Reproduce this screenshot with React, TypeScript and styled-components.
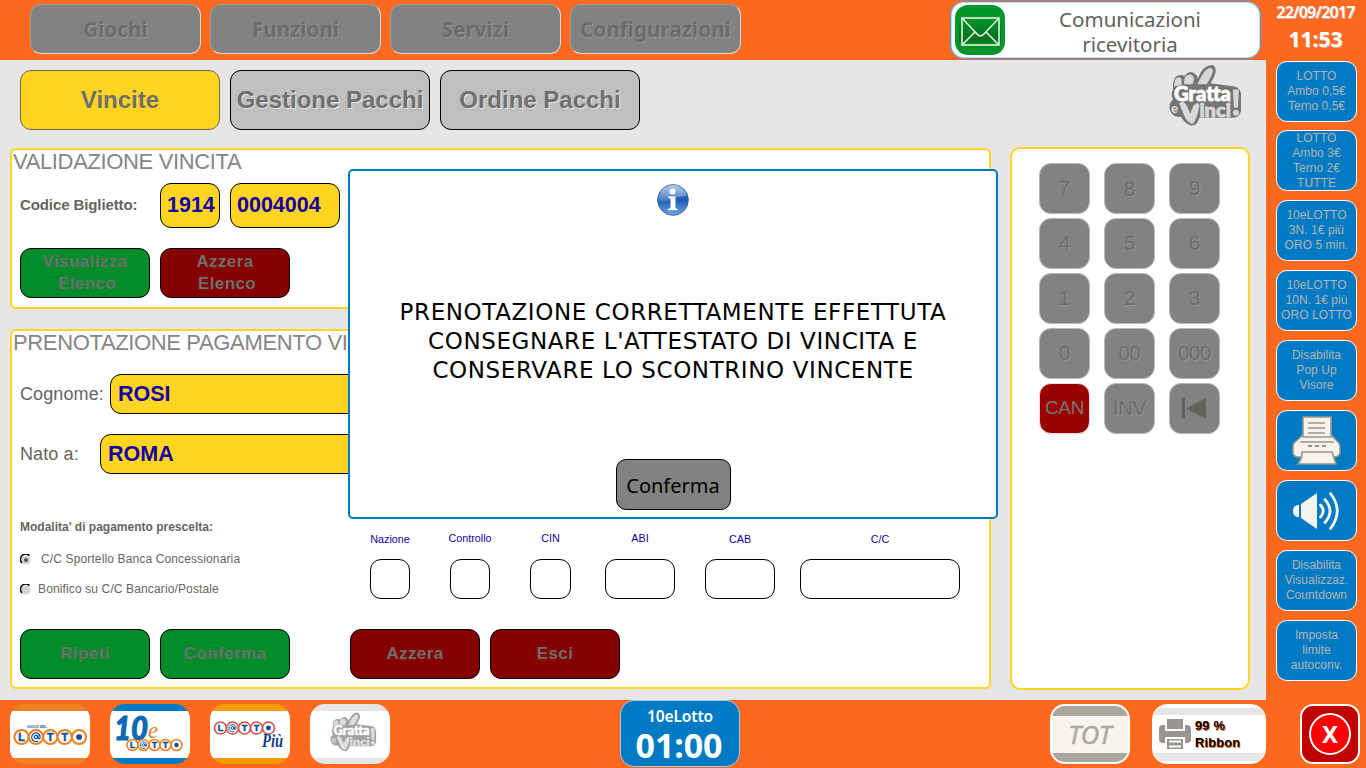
import React from 'react';
import styled, { createGlobalStyle } from 'styled-components';

const Global = createGlobalStyle`
  *, *::before, *::after { box-sizing: border-box; }
  html, body { margin: 0; padding: 0; overflow: hidden; }
  button { font: inherit; margin: 0; padding: 0; }
`;

const helvetica = `'Liberation Sans', Arial, sans-serif`;
const humanist = `'Noto Sans', sans-serif`;
const orange = '#ff681f';
const blue = '#007bc3';
const yellow = '#ffd520';
const green = '#008c29';
const red = '#850000';

const Screen = styled.div`
  position: relative;
  width: 1366px;
  height: 768px;
  display: flex;
  flex-direction: column;
  background: ${orange};
  font-family: ${helvetica};
  overflow: hidden;
  white-space: nowrap;
`;
const Upper = styled.div`
  display: flex;
  height: 700px;
  flex-shrink: 0;
`;
const Content = styled.div`
  width: 1266px;
  display: flex;
  flex-direction: column;
`;
const Header = styled.header`
  height: 60px;
  flex-shrink: 0;
  display: flex;
  padding: 4px 5px 0 30px;
  gap: 9px;
`;
const MenuButton = styled.button`
  width: 171px;
  height: 50px;
  border: 1px solid;
  border-color: #a09c98 #dcd8d4 #dcd8d4 #a09c98;
  border-radius: 11px;
  background: #828282;
  color: #6b6b6b;
  font: bold 20.5px/49px ${humanist};
  letter-spacing: 0.1px;
  text-shadow: 1px 1px 0 #969696;
`;
const NoticeButton = styled.button`
  width: 311px;
  height: 58px;
  margin: -3px 0 0 auto;
  border: 1px solid #4b96d8;
  box-shadow: inset 0 0 0 1px #c4def5;
  border-radius: 14px;
  background: #fff;
  display: flex;
  align-items: center;
  padding-left: 4px;
`;
const NoticeText = styled.span`
  flex: 1;
  padding: 3px 5px 0 0;
  text-align: center;
  color: #62615c;
  font: 20.5px/25px ${humanist};
`;
const Main = styled.main`
  height: 640px;
  background: #e6e6e6;
  display: flex;
`;
const Work = styled.div`
  width: 1000px;
  padding: 10px 9px 0 10px;
`;
const Aside = styled.div`
  width: 266px;
  padding: 0 16px 0 10px;
  display: flex;
  flex-direction: column;
`;
const Brand = styled.div`
  height: 87px;
  padding: 4px 8px 0 0;
  display: flex;
  justify-content: flex-end;
`;
const Tabs = styled.nav`
  display: flex;
  gap: 10px;
  padding-left: 10px;
  margin-bottom: 18px;
`;
const Tab = styled.button<{ $active?: boolean }>`
  width: 200px;
  height: 60px;
  border: 1px solid ${(p) => (p.$active ? '#76684a' : '#000')};
  border-radius: 11px;
  background: ${(p) => (p.$active ? yellow : '#bfbfbf')};
  color: #6f6f6f;
  font: bold 24px/58px ${helvetica};
  text-shadow: ${(p) => (p.$active ? 'none' : '1px 1px 0 #e4e4e4')};
`;
const Panels = styled.div`
  display: flex;
  flex-direction: column;
  gap: 20px;
`;
const Panel = styled.section<{ $height: number }>`
  width: 981px;
  height: ${(p) => p.$height}px;
  border: 2px solid ${yellow};
  border-radius: 6px;
  background: #fff;
  padding: 0 8px;
`;
const PanelTitle = styled.h2`
  margin: 0 0 0 -7px;
  font: 22px/23px ${helvetica};
  letter-spacing: -0.36px;
  color: #858585;
`;
const Row = styled.div<{ $top?: number }>`
  display: flex;
  align-items: center;
  margin-top: ${(p) => p.$top ?? 0}px;
`;
const FieldLabel = styled.label<{ $width: number; $bold?: boolean }>`
  width: ${(p) => p.$width}px;
  padding-bottom: ${(p) => (p.$bold ? 2 : 0)}px;
  color: #66655f;
  font: ${(p) => (p.$bold ? 'bold 15px' : '18px')}/20px ${helvetica};
  letter-spacing: ${(p) => (p.$bold ? '-0.1px' : '0.1px')};
`;
const Field = styled.div<{ $width: number; $height: number }>`
  width: ${(p) => p.$width}px;
  height: ${(p) => p.$height}px;
  margin-right: 10px;
  border: 1px solid #000;
  border-radius: 11px;
  background: ${yellow};
  color: #1500a6;
  padding-left: ${(p) => (p.$width > 200 ? 7 : 6)}px;
  font: bold 21.5px/${(p) => (p.$width > 200 ? p.$height - 1 : p.$height - 3)}px ${helvetica};
`;
const Action = styled.button<{ $tone: string }>`
  width: 130px;
  height: 50px;
  margin-right: 10px;
  border: 1px solid #000;
  border-radius: 11px;
  background: ${(p) => p.$tone};
  color: #6f6f6f;
  font: bold 17px/22px ${helvetica};
  letter-spacing: 0.4px;
`;
const Indent = styled.span`
  display: block;
  padding-left: 4px;
`;
const Gap = styled.span`
  width: 50px;
`;
const Payment = styled.div`
  display: flex;
  height: 105px;
  margin-top: 50px;
`;
const Modes = styled.div`
  width: 350px;
`;
const ModesTitle = styled.div`
  font: bold 12px/16px ${helvetica};
  color: #66655f;
  margin-bottom: 17px;
  margin-top: -5px;
`;
const Mode = styled.div<{ $gap: number }>`
  display: flex;
  align-items: center;
  gap: ${(p) => p.$gap}px;
  height: 14px;
  margin-bottom: 16px;
  color: #66655f;
  font: 12px/14px ${helvetica};
  letter-spacing: 0.13px;
`;
const Iban = styled.div`
  display: flex;
  padding-top: 8px;
`;
const IbanPart = styled.div<{ $width: number; $gap: number }>`
  width: ${(p) => p.$width}px;
  margin-right: ${(p) => p.$gap}px;
`;
const IbanLabel = styled.div<{ $low?: boolean }>`
  height: 27px;
  padding-top: ${(p) => (p.$low ? 1 : 0)}px;
  display: flex;
  justify-content: center;
  color: #1500a6;
  font: 10.8px/12px ${helvetica};
`;
const IbanBox = styled.div`
  height: 40px;
  border: 1px solid #000;
  border-radius: 11px;
  background: #fff;
`;
const Keypad = styled.section`
  width: 240px;
  height: 543px;
  border: 2px solid ${yellow};
  border-radius: 10px;
  background: #fff;
  padding: 14px 0 0 27px;
  display: grid;
  grid-template-columns: repeat(3, 51px);
  grid-auto-rows: 51px;
  gap: 4px 14px;
`;
const Key = styled.button<{ $danger?: boolean; $low?: boolean }>`
  border: 1px solid ${(p) => (p.$danger ? '#f0dcdc' : '#b8b8b8')};
  border-radius: 12px;
  background: ${(p) => (p.$danger ? '#990000' : '#828282')};
  color: ${(p) => (p.$danger ? '#777' : '#6c6c6c')};
  font: ${(p) => (p.$danger ? 19 : 20.5)}px/46px ${helvetica};
  letter-spacing: -0.4px;
  padding-bottom: ${(p) => (p.$low ? 0 : 2)}px;
  text-shadow: ${(p) => (p.$danger ? 'none' : '1px 1px 0 #949494')};
  display: flex;
  align-items: center;
  justify-content: center;
`;
const Sidebar = styled.aside`
  width: 100px;
  padding-left: 10px;
`;
const Clock = styled.div`
  height: 61px;
  color: #fff;
  width: 79px;
  text-align: center;
  padding-top: 2px;
  text-shadow: 1px 1px 0 #e0a890;
`;
const DateText = styled.div`
  font: 600 16px/20px ${humanist};
  letter-spacing: -0.75px;
`;
const TimeText = styled.div`
  margin-top: 4px;
  font: bold 21px/26px ${humanist};
`;
const Shortcut = styled.button`
  width: 81px;
  height: 61px;
  margin-bottom: 9px;
  border: 1px solid #fff;
  border-radius: 11px;
  background: ${blue};
  color: #b4b4b4;
  font: 12px/15px ${helvetica};
  letter-spacing: 0.05px;
  display: flex;
  align-items: center;
  justify-content: center;
  white-space: pre;
  overflow: hidden;
  &:nth-of-type(1) { margin-bottom: 8px; }
`;
const Footer = styled.footer`
  height: 68px;
  display: flex;
  align-items: flex-start;
  padding: 4px 0 0 10px;
`;
const Game = styled.button<{ $band: string }>`
  width: 80px;
  height: 60px;
  margin-right: 20px;
  border: 0;
  border-radius: 15px;
  overflow: hidden;
  background: linear-gradient(${(p) => p.$band} 7px, #fff 7px 54px, ${(p) => p.$band} 54px);
`;
const GameArt = styled.svg`
  display: block;
`;
const Countdown = styled.div`
  width: 120px;
  height: 67px;
  margin: -4px 310px 0 210px;
  border: 1px solid #9ccdf0;
  border-radius: 14px;
  background: ${blue};
  color: #fff;
  text-align: center;
  font: 600 15.5px/20px ${humanist};
  letter-spacing: -0.1px;
  padding-top: 5px;
`;
const CountdownTime = styled.div`
  font: bold 34px/38px ${humanist};
  padding-right: 2px;
`;
const Total = styled.button`
  width: 80px;
  height: 60px;
  margin-right: 22px;
  border: 2px solid #fff;
  border-radius: 15px;
  background: linear-gradient(#aaa79f 10px, #f7f3ed 10px 47px, #aaa79f 47px);
  color: #aaa79f;
  font: italic 400 25.5px/56px ${humanist};
  letter-spacing: 0.3px;
  -webkit-text-stroke: 0.4px #aaa79f;
`;
const Ribbon = styled.div`
  width: 114px;
  height: 60px;
  margin-right: 34px;
  border: 1px solid #fff;
  border-radius: 15px;
  background: linear-gradient(#fff 3px, #e6e6e6 3px 10px, #fff 10px 48px, #e6e6e6 48px 56px, #fff 56px);
  display: flex;
  align-items: center;
  gap: 4px;
  padding: 0 0 0 6px;
  font: bold 12.8px/17px ${helvetica};
  letter-spacing: 0.2px;
  color: #000;
  text-shadow: 1px 1px 0 ${orange};
`;
const Close = styled.button`
  width: 60px;
  height: 60px;
  border: 2px solid #fff;
  border-radius: 13px;
  background: #c00000;
  display: flex;
  align-items: center;
  justify-content: center;
`;
const CloseRing = styled.span`
  width: 42px;
  height: 42px;
  border: 2px solid #fff;
  border-radius: 50%;
  background: #ff0000;
  color: #fff;
  font: bold 24px/37px ${humanist};
`;
const Dialog = styled.div`
  position: absolute;
  left: 348px;
  top: 169px;
  width: 650px;
  height: 350px;
  border: 2px solid ${blue};
  border-radius: 5px;
  background: #fff;
  display: flex;
  flex-direction: column;
  align-items: center;
  padding-top: 13px;
`;
const Message = styled.div`
  margin-top: 82px;
  height: 87px;
  text-align: center;
  font: 23px/29px 'DejaVu Sans', sans-serif;
  letter-spacing: 0.6px;
  color: #000;
`;
const Confirm = styled.button`
  width: 115px;
  height: 51px;
  margin-top: 74px;
  border: 1px solid #000;
  border-radius: 10px;
  background: #828282;
  color: #000;
  font: 20px/51px ${humanist};
`;

const Envelope = () => (
  <svg width="50" height="50" viewBox="0 0 50 50">
    <defs>
      <linearGradient id="env" x1="0" y1="0" x2="0" y2="1">
        <stop offset="0" stopColor="#009a2e" />
        <stop offset="0.7" stopColor="#00701a" />
        <stop offset="0.85" stopColor="#009427" />
      </linearGradient>
    </defs>
    <rect width="50" height="50" rx="13" fill="#00972a" />
    <rect x="4" y="10" width="42" height="35" rx="4" fill="url(#env)" />
    <g fill="none" stroke="#e6efe3" strokeWidth="1.6">
      <rect x="7" y="13" width="37" height="27" />
      <path d="M7 13L22 29Q25.500 33 29 29L44 13M7 40l13-13M44 40L31 27" />
    </g>
  </svg>
);

const GrattaLogo = ({ width, height, light }: { width: number; height: number; light?: boolean }) => {
  const dark = light ? '#a2a2a2' : '#757575';
  const pale = light ? '#dedede' : '#d8d8d8';
  return (
    <svg width={width} height={height} viewBox="0 0 72 62">
      <path d="M4 25Q3 12 10 11Q13 10 15 12Q21 5 26 10Q29 12 28 15Q34 0 43 1Q50 5 41 19L65 22Q72 24 71 34V46Q70 53 62 53H30Q27 63 20 60Q14 57 12 52Q4 53 1 46Q-1 39 4 35Q1 30 4 25Z" fill={dark} />
      <path d="M5 22Q5 13 10 13Q14 14 12 21ZM15 20Q14 10 21 10Q27 12 23 20ZM28 20Q36 2 42 4Q46 6 37 20Z" fill={pale} />
      <text x="5" y="36" textLength="56" lengthAdjust="spacingAndGlyphs" fontFamily="Lato, sans-serif" fontSize="20" fontWeight="900" fill="#fff" stroke="#fff" strokeWidth="0.8">Gratta</text>
      <text x="2" y="48" fontFamily="Lato, sans-serif" fontSize="13" fontWeight="900" fill={pale}>e</text>
      <path d="M10 39Q13 35 17 40L21 49L24 41Q29 36 30 41Q27 57 23 59Q18 58 15 51Z" fill={pale} />
      <text x="30" y="52" textLength="31" lengthAdjust="spacingAndGlyphs" fontFamily="Lato, sans-serif" fontSize="18" fontWeight="900" fill={pale} stroke={pale} strokeWidth="0.8">inci</text>
      <path d="M63 25h6l-1 18h-4z" fill={pale} />
      <circle cx="66" cy="48" r="3" fill={pale} />
    </svg>
  );
};

const navy = '#0a4ba0';

const LottoRow = ({ x, y, r, ring, step }: { x: number; y: number; r: number; ring: string; step: number }) => (
  <g>
    {['L', 'swirl', 'T', 'T', 'dot'].map((c, i) => (
      <g key={i} transform={`translate(${x + i * step} ${y})`}>
        <circle r={r} fill="#fff" stroke={ring} strokeWidth={r / 3.6} />
        {c === 'dot' && <circle r={r * 0.4} fill={navy} />}
        {c === 'swirl' && (
          <g fill="none" stroke={navy} strokeWidth={r / 6}>
            <circle r={r * 0.24} />
            <path d={`M${r * 0.3} ${-r * 0.25}V${r * 0.2}Q${r * 0.6} ${r * 0.3} ${r * 0.6} 0A${r * 0.6} ${r * 0.6} 0 1 0 ${r * 0.3} ${r * 0.55}`} />
          </g>
        )}
        {c.length === 1 && (
          <text y={r * 0.52} textAnchor="middle" fontFamily="Liberation Sans, sans-serif" fontWeight="bold" fontSize={r * 1.5} fill={navy} stroke={navy} strokeWidth="0.5">{c}</text>
        )}
      </g>
    ))}
  </g>
);

const InfoIcon = () => (
  <svg width="32" height="32" viewBox="0 0 32 32">
    <defs>
      <linearGradient id="ball" x1="0" y1="0" x2="0" y2="1">
        <stop offset="0" stopColor="#3a6fc0" />
        <stop offset="0.5" stopColor="#1b5cb4" />
        <stop offset="1" stopColor="#6ea6e4" />
      </linearGradient>
      <linearGradient id="shine" x1="0" y1="0" x2="0" y2="1">
        <stop offset="0" stopColor="#fff" stopOpacity="0.65" />
        <stop offset="1" stopColor="#fff" stopOpacity="0.15" />
      </linearGradient>
    </defs>
    <circle cx="16" cy="16" r="15.400" fill="url(#ball)" stroke="#3a5f9e" strokeWidth="0.8" />
    <path d="M1.500 17A14.500 14.500 0 0 1 30 12Q16 13 13 16Q8 18 1.500 17Z" fill="url(#shine)" />
    <circle cx="15.500" cy="7.600" r="3" fill="#fff" />
    <path d="M11 12.500h7.500V24l2 1v1.300H11V25l2.500-1v-9.500l-2.500-.700z" fill="#fff" />
  </svg>
);

const PrinterIcon = () => (
  <svg width="50" height="50" viewBox="0 0 50 50" fill="#f7f3ed" stroke="#99968f" strokeWidth="1.600">
    <path d="M11 19L2 27Q1 28 1 31V37Q2 41 6 41H42Q47 41 48 37V31Q48 28 46 26L39 19Z" />
    <path d="M11 1H39V21H11Z" />
    <path d="M16 7H33M16 12H33M16 17H33M8 26H42" />
    <path d="M16 30h4M23 30h4M30 30h4" strokeWidth="2" />
    <path d="M10 36H40L44 48H6Q10 43 10 36Z" />
  </svg>
);

const SpeakerIcon = () => (
  <svg width="50" height="40" viewBox="0 0 50 40">
    <path d="M7 14V26Q1 26 1 20Q1 14 7 14ZM9 13L25 2V38L9 27Z" fill="#f7f3ed" />
    <g fill="none" stroke="#f7f3ed" strokeWidth="2.800" strokeLinecap="round">
      <path d="M28.500 14Q34 20 28.500 26" />
      <path d="M33 8.500Q43 20 33 31.500" />
      <path d="M38.500 2.500Q52 20 38.500 37.500" />
    </g>
  </svg>
);

const RibbonPrinter = () => (
  <svg width="32" height="31" viewBox="0 0 32 31" fill="#99968f">
    <path d="M8 0h16v10H8z" />
    <path d="M4 6h2v6h20V6h2q4 0 4 4v10q0 4-4 4h-2v-6H6v6H4q-4 0-4-4V10q0-4 4-4z" />
    <path d="M8 20h16v10H8z" />
    <path d="M10 22.500h12M10 27.500h12" stroke="#fff" strokeWidth="2" />
  </svg>
);

const BackIcon = () => (
  <svg width="25" height="21" viewBox="0 0 25 21" fill="#62615c">
    <path d="M0 0h3v20H0zM4 10.500L24 0v21z" />
  </svg>
);

const Radio = ({ on }: { on?: boolean }) => (
  <svg width="11" height="11" viewBox="0 0 11 11">
    <circle cx="6" cy="6" r="4.500" fill="#d6d2ca" />
    <path d="M2 9A5 5 0 0 1 9.500 1.600" fill="none" stroke="#000" strokeWidth="1.500" />
    {on && <circle cx="6" cy="6" r="2" fill="#55534f" />}
  </svg>
);

const shortcuts: React.ReactNode[] = [
  'LOTTO\nAmbo 0,5€\nTerno 0,5€',
  'LOTTO\nAmbo 3€\nTerno 2€\nTUTTE',
  '10eLOTTO\n3N. 1€ più\nORO 5 min.',
  '10eLOTTO\n10N. 1€ più\nORO LOTTO',
  'Disabilita\nPop Up\nVisore',
  <PrinterIcon />,
  <SpeakerIcon />,
  'Disabilita\nVisualizzaz.\nCountdown',
  'Imposta\nlimite\nautoconv.',
];

const iban = [
  { name: 'Nazione', width: 40, gap: 40, low: true },
  { name: 'Controllo', width: 40, gap: 40 },
  { name: 'CIN', width: 41, gap: 34 },
  { name: 'ABI', width: 70, gap: 30 },
  { name: 'CAB', width: 70, gap: 25, low: true },
  { name: 'C/C', width: 160, gap: 0, low: true },
];

export default function App() {
  return (
    <Screen>
      <Global />
      <Upper>
        <Content>
          <Header>
            {['Giochi', 'Funzioni', 'Servizi', 'Configurazioni'].map((m) => (
              <MenuButton key={m}>{m}</MenuButton>
            ))}
            <NoticeButton>
              <Envelope />
              <NoticeText>Comunicazioni<br />ricevitoria</NoticeText>
            </NoticeButton>
          </Header>
          <Main>
            <Work>
              <Tabs>
                <Tab $active>Vincite</Tab>
                <Tab>Gestione Pacchi</Tab>
                <Tab>Ordine Pacchi</Tab>
              </Tabs>
              <Panels>
                <Panel $height={161}>
                  <PanelTitle>VALIDAZIONE VINCITA</PanelTitle>
                  <Row $top={10}>
                    <FieldLabel $width={140} $bold>Codice Biglietto:</FieldLabel>
                    <Field $width={60} $height={45}>1914</Field>
                    <Field $width={110} $height={45}>0004004</Field>
                  </Row>
                  <Row $top={20}>
                    <Action $tone={green}>Visualizza<Indent>Elenco</Indent></Action>
                    <Action $tone={red}>Azzera<Indent>Elenco</Indent></Action>
                  </Row>
                </Panel>
                <Panel $height={360}>
                  <PanelTitle>PRENOTAZIONE PAGAMENTO VINCITA</PanelTitle>
                  <Row $top={20}>
                    <FieldLabel $width={90}>Cognome:</FieldLabel>
                    <Field $width={500} $height={40}>ROSI</Field>
                  </Row>
                  <Row $top={20}>
                    <FieldLabel $width={80}>Nato a:</FieldLabel>
                    <Field $width={500} $height={40}>ROMA</Field>
                  </Row>
                  <Payment>
                    <Modes>
                      <ModesTitle>Modalita' di pagamento prescelta:</ModesTitle>
                      <Mode $gap={10}><Radio on />C/C Sportello Banca Concessionaria</Mode>
                      <Mode $gap={7}><Radio />Bonifico su C/C Bancario/Postale</Mode>
                    </Modes>
                    <Iban>
                      {iban.map((p) => (
                        <IbanPart key={p.name} $width={p.width} $gap={p.gap}>
                          <IbanLabel $low={p.low}>{p.name}</IbanLabel>
                          <IbanBox />
                        </IbanPart>
                      ))}
                    </Iban>
                  </Payment>
                  <Row>
                    <Action $tone={green}>Ripeti</Action>
                    <Action $tone={green}>Conferma</Action>
                    <Gap />
                    <Action $tone={red}>Azzera</Action>
                    <Action $tone={red}>Esci</Action>
                  </Row>
                </Panel>
              </Panels>
            </Work>
            <Aside>
              <Brand><GrattaLogo width={73} height={63} /></Brand>
              <Keypad>
                {['7', '8', '9', '4', '5', '6', '1', '2', '3', '0', '00', '000'].map((k) => (
                  <Key key={k} $low={k === '8'}>{k}</Key>
                ))}
                <Key $danger>CAN</Key>
                <Key>INV</Key>
                <Key $low><BackIcon /></Key>
              </Keypad>
            </Aside>
          </Main>
        </Content>
        <Sidebar>
          <Clock>
            <DateText>22/09/2017</DateText>
            <TimeText>11:53</TimeText>
          </Clock>
          {shortcuts.map((s, i) => (
            <Shortcut key={i}>{s}</Shortcut>
          ))}
        </Sidebar>
      </Upper>
      <Footer>
        <Game $band="#f58220">
          <GameArt width="80" height="60">
            <text x="17" y="23.500" fontFamily="Liberation Sans, sans-serif" fontSize="3.500" fontWeight="bold" fill={navy}>GIOCO DEL</text>
            <LottoRow x={11.5} y={33} r={7.1} ring="#f08018" step={14.4} />
          </GameArt>
        </Game>
        <Game $band={blue}>
          <GameArt width="80" height="60">
            <text x="4" y="36" textLength="34" lengthAdjust="spacingAndGlyphs" fontFamily="Lato, sans-serif" fontSize="32" fontWeight="900" fontStyle="italic" fill="#0869b4" stroke="#0869b4">10</text>
            <text x="38" y="34" fontFamily="Liberation Serif, serif" fontSize="23" fontStyle="italic" fill="#f08018">e</text>
            <LottoRow x={22.5} y={41} r={5.5} ring="#f08018" step={11} />
          </GameArt>
        </Game>
        <Game $band="#f29c00">
          <GameArt width="80" height="60">
            <LottoRow x={10.5} y={24} r={6} ring="#d2524c" step={12} />
            <text x="52" y="43" textLength="21" lengthAdjust="spacingAndGlyphs" fontFamily="Liberation Serif, serif" fontSize="19" fontWeight="bold" fontStyle="italic" fill="#123f80">Più</text>
          </GameArt>
        </Game>
        <Game $band="#e6e6e6">
          <GameArt width="80" height="60">
            <g transform="translate(20 8)"><GrattaLogo width={47} height={40} light /></g>
          </GameArt>
        </Game>
        <Countdown>
          10eLotto
          <CountdownTime>01:00</CountdownTime>
        </Countdown>
        <Total>TOT</Total>
        <Ribbon>
          <RibbonPrinter />
          <span>99 %<br />Ribbon</span>
        </Ribbon>
        <Close><CloseRing>X</CloseRing></Close>
      </Footer>
      <Dialog>
        <InfoIcon />
        <Message>
          PRENOTAZIONE CORRETTAMENTE EFFETTUTA<br />
          CONSEGNARE L'ATTESTATO DI VINCITA E<br />
          CONSERVARE LO SCONTRINO VINCENTE
        </Message>
        <Confirm>Conferma</Confirm>
      </Dialog>
    </Screen>
  );
}
